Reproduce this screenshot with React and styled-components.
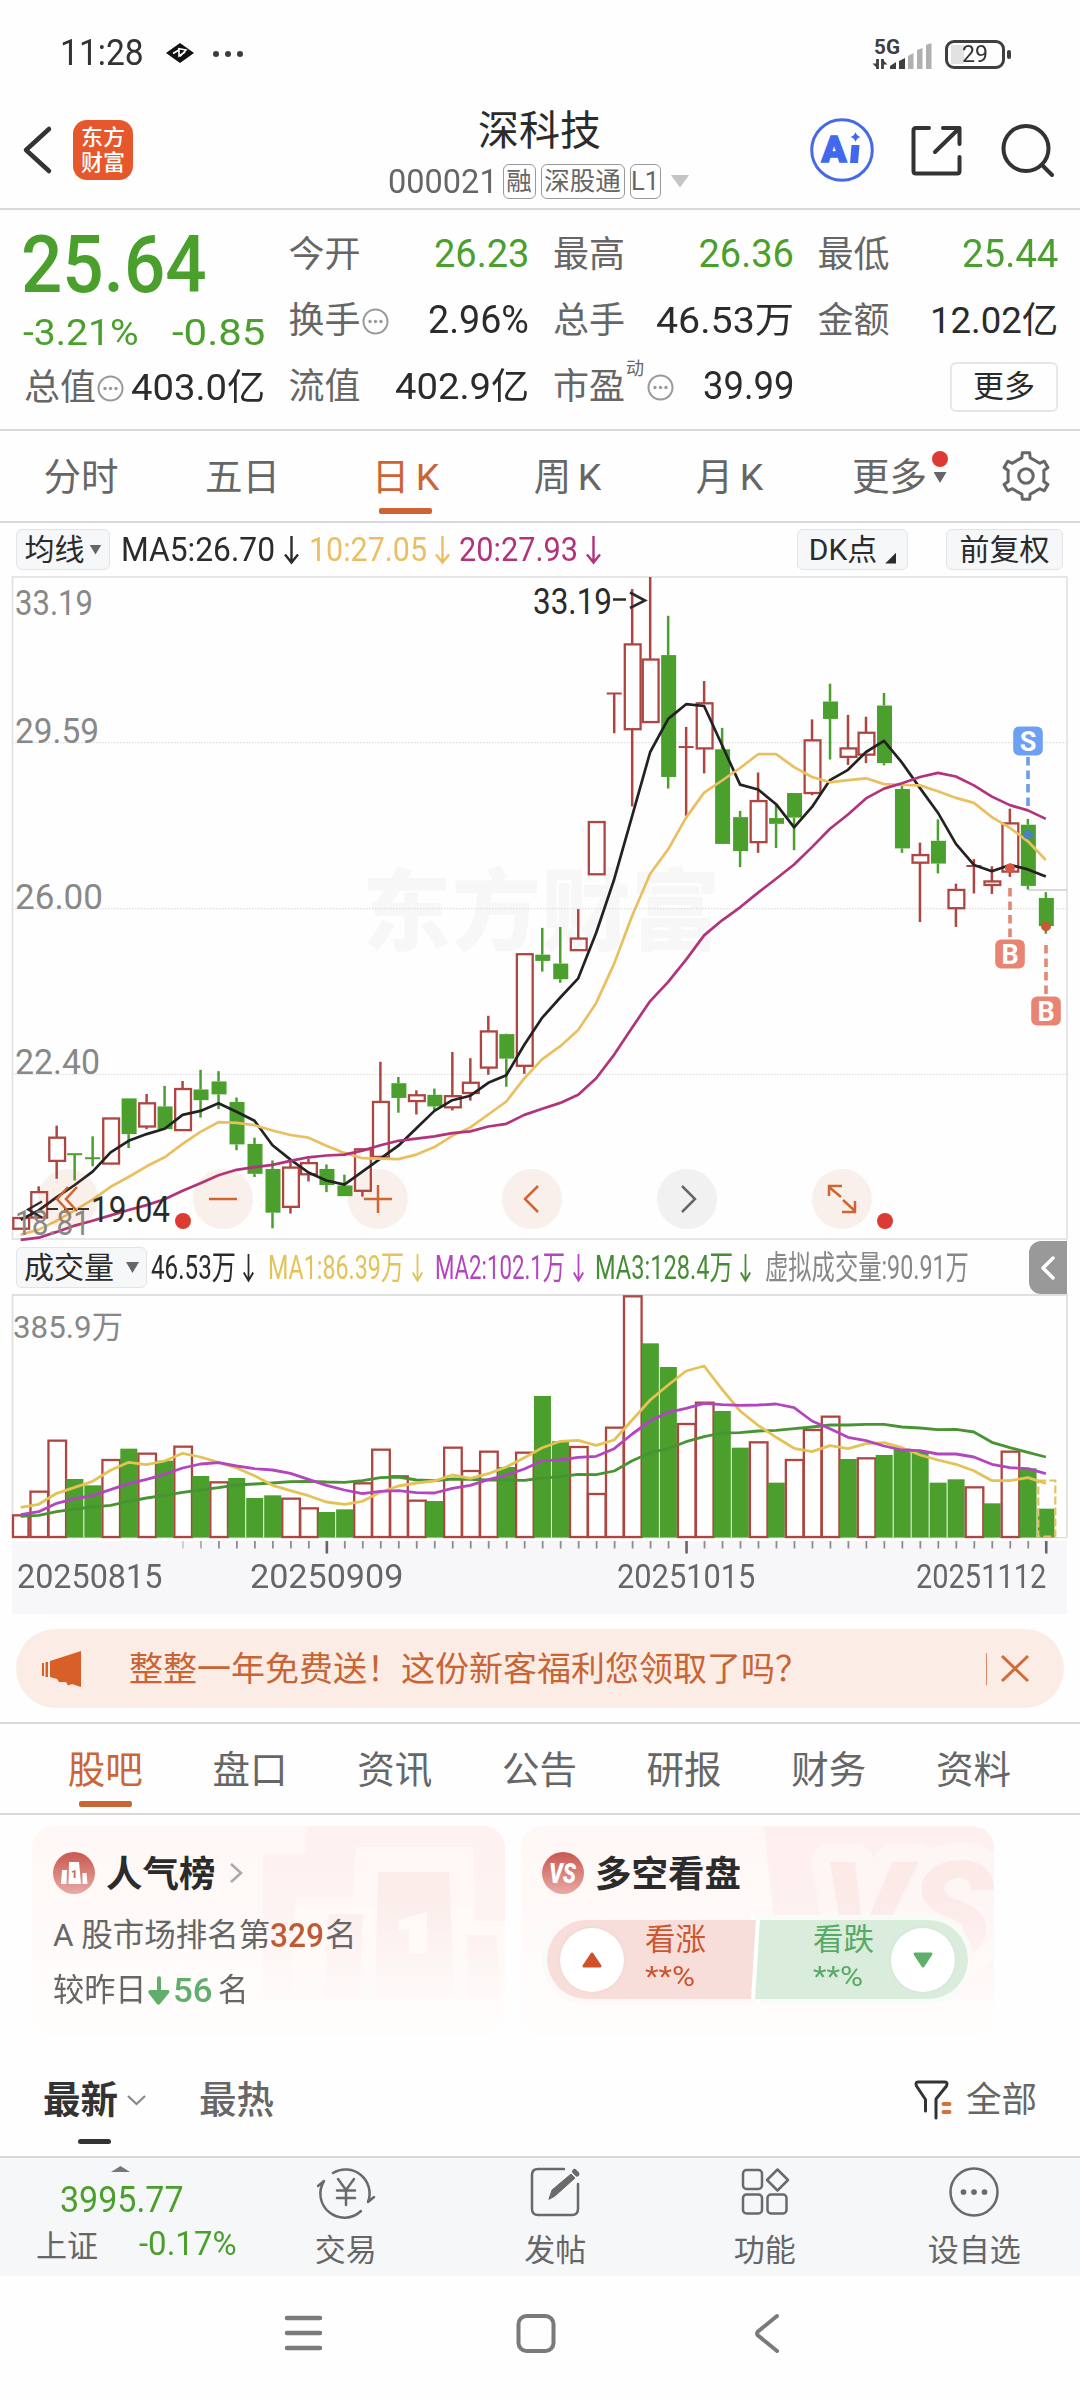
import React, { useLayoutEffect, useRef, useState } from "react";
import styled, { createGlobalStyle } from "styled-components";

const C = {
  green: "#4a9f2d",
  red: "#ad4640",
  orange: "#cb6536",
  text: "#2b2b2b",
  sub: "#666",
  faint: "#888",
  line: "#d8d8d8",
  panel: "#f6f7f9",
  gold: "#e9bf62",
  plum: "#b2337c",
};

const FONT = `Roboto, "Noto Sans CJK SC", sans-serif`;

const GlobalStyle = createGlobalStyle`
  body { margin: 0; background: #fefefe; }
  * { box-sizing: border-box; }
`;

const Page = styled.div`
  width: 1080px;
  height: 2400px;
  overflow: hidden;
  background: #fefefe;
  color: ${C.text};
  font-family: ${FONT};
  display: flex;
  flex-direction: column;
`;

/* ---------- text squeezed to a fixed measure ---------- */

const FitBox = styled.span`
  display: inline-block;
  flex: none;
  width: ${(p) => p.$w}px;
  height: ${(p) => p.$size * 1.2}px;
  line-height: ${(p) => p.$size * 1.2}px;
  font-size: ${(p) => p.$size}px;
  font-weight: ${(p) => p.$weight || 400};
  color: ${(p) => p.$color || "inherit"};
  margin-left: ${(p) => p.$ml || 0}px;
  white-space: nowrap;
`;
const FitInner = styled.span`
  display: inline-block;
  transform-origin: 0 50%;
`;

function Fit({ w, size, weight, color, ml, children }) {
  const ref = useRef(null);
  const [k, setK] = useState(1);
  useLayoutEffect(() => {
    setK(w / ref.current.offsetWidth);
  }, [w, children]);
  return (
    <FitBox $w={w} $size={size} $weight={weight} $color={color} $ml={ml}>
      <FitInner ref={ref} style={{ transform: `scaleX(${k})` }}>{children}</FitInner>
    </FitBox>
  );
}

/* ---------- status bar ---------- */

const StatusBar = styled.div`
  height: 92px;
  flex: none;
  padding: 16px 69px 0 60px;
  display: flex;
  align-items: center;
  justify-content: space-between;
  color: #333;
`;
const StatusGroup = styled.div`
  display: flex;
  align-items: center;
`;
const Icon = styled.svg`
  display: block;
  flex: none;
  overflow: visible;
  margin-left: ${(p) => p.$ml || 0}px;
  margin-top: ${(p) => p.$mt || 0}px;
`;
const Battery = styled.div`
  width: 60px;
  height: 29px;
  margin-left: 12px;
  border: 3px solid #3f3f3f;
  border-radius: 9px;
  padding: 2px;
  display: flex;
  align-items: center;
  justify-content: center;
  background: linear-gradient(90deg, #e2e2e2 0 13px, transparent 13px) 3px 2px / 40px 19px no-repeat;
`;
const BatteryTip = styled.div`
  width: 4px;
  height: 9px;
  margin-left: 2px;
  border-radius: 2px;
  background: #3f3f3f;
`;

/* ---------- title bar ---------- */

const TitleBar = styled.header`
  height: 118px;
  flex: none;
  border-bottom: 2px solid ${C.line};
  padding: 0 26px 0 22px;
  display: grid;
  grid-template-columns: 1fr auto 1fr;
  align-items: center;
`;
const Side = styled.div`
  display: flex;
  align-items: center;
  justify-content: ${(p) => (p.$end ? "flex-end" : "flex-start")};
`;
const Logo = styled.div`
  width: 60px;
  height: 60px;
  margin-left: 21px;
  border-radius: 14px;
  background: #e7572c;
  color: #fff;
  font-size: 22px;
  font-weight: 500;
  line-height: 25px;
  display: flex;
  flex-direction: column;
  align-items: center;
  justify-content: center;
`;
const TitleBlock = styled.div`
  padding: 12px 0 0 1px;
  display: flex;
  flex-direction: column;
  align-items: center;
`;
const StockName = styled.h1`
  margin: 0 0 0 2px;
  font-size: 41px;
  font-weight: 400;
  line-height: 50px;
`;
const CodeRow = styled.div`
  height: 50px;
  display: flex;
  align-items: center;
  color: ${C.sub};
`;
const Tag = styled.span`
  width: ${(p) => p.$w}px;
  height: 35px;
  margin-left: 5px;
  border: 1.5px solid #999;
  border-radius: 6px;
  font-size: 25.5px;
  line-height: 33px;
  display: flex;
  justify-content: center;
  white-space: nowrap;
`;
const Triangle = styled.span`
  flex: none;
  width: ${(p) => p.$w}px;
  height: ${(p) => p.$h}px;
  margin-left: ${(p) => p.$ml || 0}px;
  background: ${(p) => p.$color};
  clip-path: ${(p) => (p.$up ? "polygon(50% 0, 100% 100%, 0 100%)" : "polygon(0 0, 100% 0, 50% 100%)")};
`;

/* ---------- quote ---------- */

const Quote = styled.section`
  height: 221px;
  flex: none;
  padding: 12px 22px 7px 24px;
  border-bottom: 2px solid ${C.line};
  display: grid;
  grid-template-columns: repeat(4, 1fr);
  column-gap: 24px;
`;
const QuoteCol = styled.div`
  display: flex;
  flex-direction: column;
`;
const Cell = styled.div`
  height: ${(p) => p.$h || 66}px;
  display: flex;
  align-items: center;
  justify-content: space-between;
  color: ${(p) => p.$color || C.text};
`;
const Label = styled.span`
  display: flex;
  align-items: center;
  font-size: 36px;
  line-height: 44px;
  color: ${C.sub};
  white-space: nowrap;
`;
const Sup = styled.span`
  align-self: flex-start;
  font-size: 18px;
  line-height: 20px;
  margin: -6px 3px 0 1px;
`;
const MoreButton = styled.button`
  width: 108px;
  height: 50px;
  margin: -1px 0 0 auto;
  padding: 0;
  border: 2px solid #e6e6e6;
  border-radius: 6px;
  background: transparent;
  color: ${C.text};
  font: 400 31px/46px ${FONT};
`;

/* ---------- tabs ---------- */

const Tabs = styled.nav`
  height: ${(p) => p.$h}px;
  flex: none;
  border-top: ${(p) => (p.$top ? `2px solid ${C.line}` : "none")};
  border-bottom: 2px solid ${C.line};
  padding: 20px 0 0 ${(p) => p.$pl}px;
  display: flex;
`;
const TabItem = styled.div`
  width: ${(p) => p.$w}px;
  flex: none;
  display: flex;
  flex-direction: column;
  align-items: center;
  color: ${(p) => (p.$active ? C.orange : C.sub)};
  &::after {
    content: "";
    width: 53px;
    height: 6px;
    margin-top: 6px;
    border-radius: 2px;
    background: ${(p) => (p.$active ? C.orange : "transparent")};
  }
`;
const TabLabel = styled.span`
  padding-top: 1px;
  font-size: 37.5px;
  line-height: 50px;
  word-spacing: -3px;
  white-space: nowrap;
`;
const MoreMark = styled.span`
  padding-left: 5px;
  display: flex;
  flex-direction: column;
  align-items: center;
  gap: 5px;
`;
const Dot = styled.span`
  width: 16px;
  height: 16px;
  border-radius: 50%;
  background: #dc3b33;
`;
const TabsMore = styled.div`
  display: flex;
  height: 50px;
  color: ${C.sub};
  margin-left: 40px;
`;

/* ---------- indicator rows ---------- */

const IndicatorRow = styled.div`
  height: 53px;
  flex: none;
  padding: 0 ${(p) => p.$pr}px 0 16px;
  display: flex;
  align-items: center;
`;
const Chip = styled.button`
  width: ${(p) => p.$w}px;
  height: 41px;
  flex: none;
  margin: 0 0 0 ${(p) => p.$ml || 0}px;
  padding: 0;
  border: 1.5px solid #e2e4e8;
  border-radius: 6px;
  background: ${C.panel};
  color: ${C.text};
  font: 400 ${(p) => p.$size || 30}px/39px ${FONT};
  display: flex;
  align-items: center;
  justify-content: center;
  white-space: nowrap;
`;
const Corner = styled.span`
  width: 11px;
  height: 11px;
  margin: 17px 0 0 8px;
  background: ${C.text};
  clip-path: polygon(100% 0, 100% 100%, 0 100%);
`;
const Drawer = styled.div`
  width: 38px;
  height: 53px;
  margin-left: auto;
  border-radius: 12px 0 0 12px;
  background: #999;
  display: flex;
  align-items: center;
  justify-content: center;
`;

/* ---------- charts ---------- */

const ChartArea = styled.div`
  position: relative;
  height: 665px;
  flex: none;
`;
const Plot = styled.svg`
  display: block;
  flex: none;
  font-family: ${FONT};
`;
const Controls = styled.div`
  position: absolute;
  left: 38px;
  bottom: 12px;
  display: flex;
  gap: 94.8px;
`;
const RoundButton = styled.button`
  width: 60px;
  height: 60px;
  padding: 0;
  border: 0;
  border-radius: 50%;
  background: ${(p) => (p.$muted ? "rgba(0,0,0,.05)" : "rgba(205,105,45,.09)")};
  display: flex;
  align-items: center;
  justify-content: center;
`;
const Axis = styled.div`
  height: 73px;
  flex: none;
  margin: 0 13px 0 12px;
  background: #f7f7fa;
  color: ${C.sub};
`;
const AxisLabels = styled.div`
  display: flex;
  padding: 1px 0 0 5px;
`;

/* ---------- banner ---------- */

const Banner = styled.div`
  height: 79px;
  flex: none;
  margin: 15px 16px 14px;
  padding: 0 35px 0 26px;
  border-radius: 40px;
  background: #fbede5;
  display: flex;
  align-items: center;
  color: #c96434;
`;
const BannerText = styled.span`
  margin-left: 47px;
  font-size: 34px;
  line-height: 44px;
  white-space: nowrap;
`;
const BannerRule = styled.span`
  width: 1.5px;
  height: 32px;
  margin: 0 14px 0 auto;
  background: #d58a64;
`;

/* ---------- cards ---------- */

const Cards = styled.section`
  flex: none;
  padding: 11px 0 0 32px;
  display: flex;
  gap: 16px;
`;
const Card = styled.article`
  position: relative;
  width: 473px;
  height: 210px;
  padding: 20px 20px 0 21px;
  border-radius: 22px;
  overflow: hidden;
  background: linear-gradient(180deg, #fef7f5, #fffdfc 90%);
`;
const CardArt = styled.svg`
  position: absolute;
  inset: 0;
  mask-image: linear-gradient(180deg, #000 35%, rgba(0,0,0,.15) 83%, transparent 85%);
`;
const CardBody = styled.div`
  position: relative;
`;
const CardHead = styled.div`
  height: 54px;
  display: flex;
  align-items: center;
`;
const CardTitle = styled.span`
  margin: 3px 0 0 11px;
  font-size: 36.5px;
  line-height: 46px;
  font-weight: 700;
`;
const CardLine = styled.div`
  height: 55px;
  margin-top: ${(p) => p.$mt || 0}px;
  display: flex;
  align-items: center;
  font-size: 31.8px;
  color: ${C.sub};
  white-space: nowrap;
`;
const Vote = styled.div`
  position: relative;
  width: 431px;
  height: 89px;
  margin: 15px 0 0 0;
  border: 5px solid rgba(255,255,255,.8);
  border-radius: 45px;
  background: linear-gradient(93.5deg, #f8deda 0 208px, #fff 209px 212px, #daeddc 213px);
  padding: 0 12px 0 13px;
  display: flex;
  align-items: center;
`;
const VoteKnob = styled.span`
  width: 64px;
  height: 64px;
  border-radius: 50%;
  background: #fff;
  box-shadow: 0 0 4px rgba(0,0,0,.05);
  display: flex;
  align-items: center;
  justify-content: center;
`;
const VoteText = styled.div`
  margin: -5px ${(p) => p.$mr || 0}px 0 ${(p) => p.$ml}px;
  color: ${(p) => p.$color};
  font-size: 30.5px;
  line-height: 38px;
  display: flex;
  flex-direction: column;
  gap: 2px;
`;

/* ---------- filter row ---------- */

const FilterRow = styled.div`
  height: 122px;
  flex: none;
  border-bottom: 2px solid #d6d9dc;
  padding: 39px 43px 0 43px;
  display: flex;
`;
const FilterTab = styled.div`
  display: flex;
  flex-direction: column;
  font-size: 37.5px;
  line-height: 50px;
  font-weight: ${(p) => p.$weight};
  color: ${(p) => p.$color};
  margin-left: ${(p) => p.$ml || 0}px;
`;
const FilterTop = styled.div`
  display: flex;
  align-items: center;
`;
const FilterBar = styled.span`
  width: 33px;
  height: 5px;
  margin: 14px 0 0 35px;
  border-radius: 3px;
  background: #333;
`;
const FilterAll = styled.div`
  margin-left: auto;
  height: 50px;
  display: flex;
  align-items: center;
  font-size: 35.5px;
  line-height: 50px;
  color: ${C.sub};
`;

/* ---------- bottom bars ---------- */

const BottomBar = styled.footer`
  height: 118px;
  flex: none;
  background: ${C.panel};
  display: flex;
`;
const IndexBox = styled.div`
  width: 241px;
  padding-top: 8px;
  display: flex;
  flex-direction: column;
  align-items: center;
`;
const IndexRow = styled.div`
  align-self: stretch;
  height: ${(p) => p.$h}px;
  margin-top: ${(p) => p.$mt || 0}px;
  padding-left: ${(p) => p.$pl}px;
  display: flex;
  align-items: center;
  font-size: 31px;
  color: ${C.sub};
`;
const Action = styled.div`
  width: 209.5px;
  padding-top: 8px;
  display: flex;
  flex-direction: column;
  align-items: center;
  font-size: 31px;
  line-height: 40px;
  color: ${C.sub};
  gap: 13px;
`;
const SystemNav = styled.div`
  height: 124px;
  flex: none;
  padding: 38px 0 0 285px;
  display: flex;
`;

/* ---------- chart data ---------- */

// high, body top, body bottom, low; u = up (hollow), d = down (solid)
const CANDLES = [
  "u 1474 1474 1498 1498", "u 1403 1416 1473 1473", "u 1267 1294 1346 1386", "d 1331 1330 1332 1390",
  "d 1291 1339 1341 1358", "u 1251 1251 1352 1352", "d 1206 1206 1286 1317", "u 1196 1217 1269 1275",
  "d 1178 1224 1275 1275", "u 1167 1185 1277 1277", "d 1142 1186 1210 1249", "d 1145 1168 1197 1230",
  "d 1204 1214 1309 1322", "d 1294 1308 1375 1382", "d 1345 1364 1462 1497", "u 1346 1361 1449 1464",
  "u 1341 1351 1376 1392", "d 1354 1364 1400 1416", "d 1377 1401 1425 1425", "u 1320 1320 1413 1426",
  "u 1124 1214 1337 1337", "d 1158 1172 1205 1238", "u 1188 1199 1212 1242", "d 1184 1198 1224 1232",
  "u 1102 1201 1226 1233", "u 1116 1171 1194 1211", "u 1021 1056 1137 1153", "d 1061 1062 1117 1180",
  "u 883 883 1133 1151", "d 824 884 898 922", "d 822 904 939 947", "u 782 848 874 874",
  "u 587 587 704 704", "u 299 298 300 388", "u 65 189 379 552", "u 38 223 363 363",
  "d 125 213 486 512", "u 374 418 420 573", "u 271 321 422 478", "d 376 424 636 636",
  "d 562 576 652 688", "u 476 540 632 656", "d 549 578 591 645", "d 522 522 577 650",
  "u 357 404 522 527", "d 277 317 356 447", "u 347 422 441 459", "u 351 387 436 455",
  "d 298 326 455 460", "d 506 513 646 656", "u 633 661 678 811", "d 581 629 680 702",
  "u 725 739 780 822", "u 670 684 687 747", "u 686 720 728 748", "u 557 590 698 710",
  "d 580 593 730 738", "d 744 757 820 837",
].map((s) => {
  const [kind, ...v] = s.split(" ");
  return { up: kind === "u", v: v.map(Number) };
});

const MA5 = [1478,1457,1427,1400,1370,1327,1301,1286,1274,1243,1234,1217,1236,1256,1311,1343,1372,1390,1399,1370,1341,1312,1273,1234,1210,1200,1171,1154,1086,1025,980,937,835,715,573,430,356,323,327,415,503,514,547,599,553,493,470,430,405,454,511,566,636,683,697,683,693,709];
const MA10 = [1511,1500,1480,1457,1433,1404,1382,1358,1338,1308,1281,1259,1261,1266,1278,1288,1294,1312,1328,1340,1341,1342,1332,1315,1290,1271,1242,1213,1161,1118,1089,1053,992,904,797,703,648,577,521,494,466,435,435,464,486,498,493,489,502,504,505,518,533,544,576,600,630,672];
const MA20 = [1523,1518,1505,1491,1480,1468,1456,1445,1432,1413,1396,1378,1366,1360,1355,1346,1338,1334,1332,1323,1311,1301,1296,1291,1284,1280,1269,1263,1243,1229,1216,1198,1161,1108,1047,988,945,895,841,807,778,745,714,682,643,602,570,534,512,500,486,477,485,505,530,549,561,580];

const VOLUMES = [853,782,629,747,766,687,656,668,692,647,738,754,744,804,796,803,832,846,838,757,656,736,809,813,650,720,662,711,665,498,634,648,789,590,196,340,411,579,515,543,653,634,758,687,597,557,687,682,675,656,666,758,748,769,820,662,715,836];
const HOLLOW_BARS = new Set([0,1,2,5,7,9,11,15,16,19,20,21,22,24,25,26,28,31,32,33,34,37,38,41,43,44,45,47,53,55]);
const VMA1 = [832,823,790,772,754,721,697,704,693,670,681,697,714,737,766,782,797,816,823,814,787,768,759,753,735,745,731,711,683,653,634,631,646,630,570,510,465,423,408,478,543,586,622,655,665,647,656,641,638,653,675,690,703,722,752,752,743,760];
const VMA2 = [854,845,820,806,797,779,761,748,733,714,702,698,708,716,720,730,748,766,780,791,784,782,788,789,775,766,749,735,717,692,690,682,679,656,612,573,547,535,520,524,526,525,522,533,573,596,622,632,648,660,662,672,672,681,703,713,716,731];
const VMA3 = [859,856,845,837,831,826,814,804,796,787,780,773,765,762,759,755,754,756,757,752,743,741,750,752,747,748,750,750,751,744,740,733,734,723,692,668,656,635,620,609,608,603,601,596,591,585,585,583,583,591,594,599,598,606,637,653,667,681];

const cx = (i) => 20.7 + 17.985 * i;
const priceY = (v) => 560 + v / 2.24;
const volY = (v) => 1230 + v / 3;
const line = (vals, fy) => vals.map((v, i) => `${cx(i).toFixed(1)},${fy(v).toFixed(1)}`).join(" ");

function Candle({ i, up, v }) {
  const [h, t, b, l] = v.map(priceY);
  const x = cx(i);
  const color = up ? C.red : C.green;
  const flat = b - t < 1.6;
  return (
    <g stroke={color} strokeWidth="2.5" fill="none">
      {h < t && <line x1={x} x2={x} y1={h} y2={t} />}
      {l > b && <line x1={x} x2={x} y1={b} y2={l} />}
      {flat ? (
        <line x1={x - 7.5} x2={x + 7.5} y1={(t + b) / 2} y2={(t + b) / 2} strokeWidth="2" />
      ) : up ? (
        <rect x={x - 7.4} y={t} width="15.8" height={b - t} strokeWidth="2.3" />
      ) : (
        <rect x={x - 7} y={t} width="15" height={b - t} fill={color} stroke="none" />
      )}
    </g>
  );
}

function Marker({ x, y, letter, color }) {
  return (
    <g>
      <rect x={x - 14.8} y={y - 14.5} width="29.6" height="29" rx="6" fill={color} />
      <text x={x} y={y + 9.8} textAnchor="middle" fontSize="27" fontWeight="700" fill="#fff">{letter}</text>
    </g>
  );
}

const PRICE_LABELS = [
  ["33.19", 614.5, 78], ["29.59", 742.6, 84], ["26.00", 908.6, 88], ["22.40", 1074, 85], ["18.81", 1235, 75],
];

function PriceChart() {
  return (
    <Plot width="1080" height="665" viewBox="0 576 1080 665">
      <text x="362" y="943" fontSize="89" fontWeight="900" fill="#f7f7f7" textLength="358">东方财富</text>
      {[742.6, 908.7, 1074.3].map((y) => (
        <line key={y} x1="12" x2="1067" y1={y} y2={y} stroke="#dedede" strokeWidth="1.2" strokeDasharray="1.5 1.5" />
      ))}
      <rect x="12.5" y="577" width="1054.5" height="662" fill="none" stroke="#e0e0e0" strokeWidth="1.6" />
      <line x1="1028" x2="1067" y1="890" y2="890" stroke="#ccc" strokeWidth="1.6" />
      {CANDLES.map((c, i) => <Candle key={i} i={i} {...c} />)}
      <g fill="none" strokeWidth="2.7" strokeLinejoin="round">
        <polyline points={line(MA5, priceY)} stroke="#222" />
        <polyline points={line(MA10, priceY)} stroke={C.gold} />
        <polyline points={line(MA20, priceY)} stroke={C.plum} />
      </g>
      {PRICE_LABELS.map(([t, y, w]) => (
        <text key={t} x="15" y={y} fontSize="35" fill={C.faint} textLength={w} lengthAdjust="spacingAndGlyphs">{t}</text>
      ))}
      <g fill={C.text} fontSize="36">
        <text x="533" y="613.5" textLength="79" lengthAdjust="spacingAndGlyphs">33.19</text>
        <text x="91" y="1222" textLength="79" lengthAdjust="spacingAndGlyphs">19.04</text>
      </g>
      <g stroke={C.text} strokeWidth="2.6" fill="none">
        <path d="M613 599.5h13M630 592.5l15 8-15 7.5" />
        <path d="M42 1201.5l-14 8 14 8M47 1209h11M64 1209h9M78 1209h11" strokeWidth="2.2" />
      </g>
      <circle cx="183" cy="1221" r="8" fill="#dc3b33" />
      <circle cx="885" cy="1221" r="8" fill="#dc3b33" />
      <g strokeWidth="3.6" strokeDasharray="8.5 5">
        <line x1="1028" x2="1028" y1="757" y2="807" stroke="#6a9eea" />
        <line x1="1010" x2="1010" y1="888" y2="938" stroke="#e58671" />
        <line x1="1046" x2="1046" y1="945" y2="995" stroke="#e58671" />
      </g>
      <ellipse cx="1028" cy="834.5" rx="5" ry="4.6" fill="#4b83bd" />
      <ellipse cx="1010" cy="868" rx="5" ry="4.6" fill="#de5443" />
      <ellipse cx="1046" cy="926.5" rx="5" ry="4.6" fill="#c75a35" />
      <Marker x={1028} y={741} letter="S" color="#6d9ff2" />
      <Marker x={1010} y={954} letter="B" color="#e98472" />
      <Marker x={1046} y={1011} letter="B" color="#e98472" />
    </Plot>
  );
}

function VolumeChart() {
  return (
    <Plot width="1080" height="247" viewBox="0 1294 1080 247">
      <path d="M12.5 1537V1295H1067V1537" fill="none" stroke="#e0e0e0" strokeWidth="1.8" />
      <line x1="12" x2="1067" y1="1537.6" y2="1537.6" stroke="#dcdcdc" strokeWidth="1.4" />
      <text x="13" y="1337.5" fontSize="32" fill={C.faint} textLength="110" lengthAdjust="spacingAndGlyphs">385.9万</text>
      {VOLUMES.map((v, i) =>
        HOLLOW_BARS.has(i) ? (
          <rect key={i} x={i ? cx(i) - 8.2 : 13} y={volY(v) + 1} width={i ? 17.6 : 15.5} height={1536 - volY(v)} fill="none" stroke={C.red} strokeWidth="2.3" />
        ) : (
          <rect key={i} x={cx(i) - 8.3} y={volY(v)} width="17" height={1537.5 - volY(v)} fill={C.green} />
        )
      )}
      <rect x="1038.3" y="1480.5" width="17" height="56" fill="none" stroke={C.gold} strokeWidth="2.2" strokeDasharray="8 3" />
      <g fill="none" strokeWidth="2.8" strokeLinejoin="round">
        <polyline points={line(VMA3, volY)} stroke="#489433" />
        <polyline points={line(VMA1, volY)} stroke="#e4c356" />
        <polyline points={line(VMA2, volY)} stroke="#b345be" />
      </g>
    </Plot>
  );
}

function AxisTicks() {
  return (
    <Plot width="1055" height="15" viewBox="12 1541 1055 15">
      {Array.from({ length: 49 }, (_, k) => k + 9).map((i) => {
        const major = i === 17 || i === 37 || i === 57;
        return (
          <line key={i} x1={cx(i) + 0.4} x2={cx(i) + 0.4} y1="1541" y2={major ? 1553.5 : 1548.5}
            stroke={major ? "#666" : "#8c8c8c"} strokeWidth={major ? 2.6 : 1.8} opacity={i === 9 ? 0.4 : i === 10 ? 0.7 : 1} />
        );
      })}
    </Plot>
  );
}

/* ---------- icons ---------- */

const DownArrow = ({ color, ml, w = 15 }) => (
  <Icon $ml={ml} $mt={1} width={w} height="28" viewBox="0 0 15 28" preserveAspectRatio="none" fill="none" stroke={color} strokeWidth="2.4">
    <path d="M7.5 0v26M1 18.5l6.5 8 6.5-8" />
  </Icon>
);

const InfoDots = ({ ml = 1 }) => (
  <Icon $ml={ml} width="27" height="27" viewBox="0 0 27 27">
    <circle cx="13.5" cy="13.5" r="12" fill="none" stroke="#999" strokeWidth="2" />
    {[8, 13.5, 19].map((x) => <circle key={x} cx={x} cy="13.5" r="1.7" fill="#999" />)}
  </Icon>
);

function Gear({ ml }) {
  const pts = [];
  for (let k = 0; k < 6; k++) {
    [[-30, 18], [-13, 18.6], [-9, 23.5], [9, 23.5], [13, 18.6]].forEach(([d, r]) => {
      const a = ((k * 60 - 90 + d) * Math.PI) / 180;
      pts.push(`${(25 + r * Math.cos(a)).toFixed(2)},${(25 + r * Math.sin(a)).toFixed(2)}`);
    });
  }
  return (
    <Icon $ml={ml} width="50" height="50" viewBox="0 0 50 50" fill="none" stroke="#666" strokeWidth="3" strokeLinejoin="round">
      <polygon points={pts.join(" ")} />
      <circle cx="25" cy="25" r="7.2" />
    </Icon>
  );
}

/* ---------- sections ---------- */

function Status() {
  return (
    <StatusBar>
      <StatusGroup>
        <Fit w={84} size={36}>11:28</Fit>
        <Icon $ml={22} $mt={-3} width="28" height="20" viewBox="0 0 28 20">
          <path d="M14 0L28 10 14 20 0 10z" fill="#111" />
          <path d="M7 10.5l6-3.5v6l6-4M12 5.5l8 1.5-6 6.5" fill="none" stroke="#fff" strokeWidth="1.6" />
        </Icon>
        <Icon $ml={18} width="32" height="8" viewBox="0 0 32 8" fill="#3c3c3c">
          <circle cx="4" cy="4" r="3" /><circle cx="16" cy="4" r="3" /><circle cx="28" cy="4" r="3" />
        </Icon>
      </StatusGroup>
      <StatusGroup>
        <Icon width="60" height="30" viewBox="874 37 60 30">
          <text x="875" y="52" fontSize="20" fontWeight="700" fill="#3f3f3f" textLength="26" lengthAdjust="spacingAndGlyphs">5G</text>
          <path d="M878.5 57v10M883.5 57v10" stroke="#3f3f3f" strokeWidth="2.8" />
          <path d="M873.5 61.5h5v5zM888.5 62.5h-5v-5z" fill="#3f3f3f" />
          <path d="M891 67v-3l6-4v7zM900 67v-8l6-3v11z" fill="#3f3f3f" />
          <path d="M909 67V54l5.5-3v16zM918 67V48l5.500-2v21zM927 67V43l5.5-2v26z" fill="#b0b0b0" />
        </Icon>
        <Battery><Fit w={26} size={24}>29</Fit></Battery>
        <BatteryTip />
      </StatusGroup>
    </StatusBar>
  );
}

function Header() {
  return (
    <TitleBar>
      <Side>
        <Icon width="30" height="48" viewBox="0 0 30 48" fill="none" stroke="#333" strokeWidth="4.5" strokeLinecap="round" strokeLinejoin="round">
          <path d="M27 3L4 24l23 21" />
        </Icon>
        <Logo><span>东方</span><span>财富</span></Logo>
      </Side>
      <TitleBlock>
        <StockName>深科技</StockName>
        <CodeRow>
          <Fit w={110} size={34}>000021</Fit>
          <Tag $w={33}>融</Tag>
          <Tag $w={84}>深股通</Tag>
          <Tag $w={31}>L1</Tag>
          <Triangle $w={19} $h={13} $ml={10} $color="#c4c4c4" />
        </CodeRow>
      </TitleBlock>
      <Side $end>
        <Icon width="64" height="64" viewBox="0 0 64 64">
          <circle cx="32" cy="32" r="30.3" fill="none" stroke="#466ae6" strokeWidth="3" />
          <text x="11.5" y="43.5" fontSize="36" fontWeight="900" fill="#4169ee" stroke="#4169ee" strokeWidth="1.5" textLength="25" lengthAdjust="spacingAndGlyphs">A</text>
          <path d="M41.5 27h8l-1.500 18h-8z" fill="#4169ee" />
          <path d="M45.5 14q1.2 4 5 5-3.8 1-5 5-1.2-4-5-5 3.8-1 5-5z" fill="#4169ee" />
        </Icon>
        <Icon $ml={37} width="51" height="51" viewBox="0 0 51 51" fill="none" stroke="#333" strokeWidth="4" strokeLinecap="round" strokeLinejoin="round">
          <path d="M18 3H5Q2.500 3 2.500 5.500V46Q2.500 48.500 5 48.500H46Q48.500 48.500 48.500 46V32" />
          <path d="M32 3h16.500V19M48 3.500L24 27" />
        </Icon>
        <Icon $ml={40} width="52" height="52" viewBox="0 0 52 52" fill="none" stroke="#333" strokeWidth="4" strokeLinecap="round">
          <circle cx="24" cy="24.5" r="22.5" />
          <path d="M40 41l10 10" />
        </Icon>
      </Side>
    </TitleBar>
  );
}

function QuotePanel() {
  return (
    <Quote>
      <QuoteCol>
        <Cell $h={87} $color={C.green}><Fit w={186} size={79} weight={500} ml={-3}>25.64</Fit></Cell>
        <Cell $h={48} $color={C.green}>
          <Fit w={115} size={37} ml={-1}>-3.21%</Fit>
          <Fit w={93} size={37}>-0.85</Fit>
        </Cell>
        <Cell $h={62}><Label>总值<InfoDots /></Label><Fit w={134} size={36.5}>403.0亿</Fit></Cell>
      </QuoteCol>
      <QuoteCol>
        <Cell $color={C.green}><Label>今开</Label><Fit w={95} size={38}>26.23</Fit></Cell>
        <Cell><Label>换手<InfoDots /></Label><Fit w={101} size={38}>2.96%</Fit></Cell>
        <Cell><Label>流值</Label><Fit w={134} size={36.5}>402.9亿</Fit></Cell>
      </QuoteCol>
      <QuoteCol>
        <Cell $color={C.green}><Label>最高</Label><Fit w={95} size={38}>26.36</Fit></Cell>
        <Cell><Label>总手</Label><Fit w={138} size={36.5}>46.53万</Fit></Cell>
        <Cell><Label>市盈<Sup>动</Sup><InfoDots ml={0} /></Label><Fit w={91} size={38}>39.99</Fit></Cell>
      </QuoteCol>
      <QuoteCol>
        <Cell $color={C.green}><Label>最低</Label><Fit w={96} size={38}>25.44</Fit></Cell>
        <Cell><Label>金额</Label><Fit w={128} size={36.5}>12.02亿</Fit></Cell>
        <Cell><MoreButton>更多</MoreButton></Cell>
      </QuoteCol>
    </Quote>
  );
}

function PeriodTabs() {
  return (
    <Tabs $h={92} $pl={0}>
      {[["分时", 162], ["五日", 161], ["日 K", 165], ["周 K", 159], ["月 K", 165]].map(([t, w]) => (
        <TabItem key={t} $w={w} $active={t === "日 K"}>
          <TabLabel>{t}</TabLabel>
        </TabItem>
      ))}
      <TabsMore>
        <TabLabel>更多</TabLabel>
        <MoreMark>
          <Dot />
          <Triangle $w={13} $h={11} $color="#666" />
        </MoreMark>
      </TabsMore>
      <Gear ml={53} />
    </Tabs>
  );
}

function MaRow() {
  return (
    <IndicatorRow $pr={16}>
      <Chip $w={94}>均线<Triangle $w={12} $h={10} $ml={5} $color="#666" /></Chip>
      <Fit ml={11} w={154} size={33}>MA5:26.70</Fit>
      <DownArrow ml={9} color={C.text} />
      <Fit ml={10} w={118} size={33} color={C.gold}>10:27.05</Fit>
      <DownArrow ml={8} color={C.gold} />
      <Fit ml={9} w={119} size={33} color={C.plum}>20:27.93</Fit>
      <DownArrow ml={8} color={C.plum} />
      <Chip $w={111} $ml={196}>DK点<Corner /></Chip>
      <Chip $w={117} $ml={38}>前复权</Chip>
    </IndicatorRow>
  );
}

function VolumeRow() {
  return (
    <IndicatorRow $pr={13}>
      <Chip $w={131}>成交量<Triangle $w={13} $h={11} $ml={12} $color="#666" /></Chip>
      <Fit ml={4} w={85} size={33}>46.53万</Fit>
      <DownArrow ml={7} w={11} color={C.text} />
      <Fit ml={14} w={136} size={33} color="#e4c356">MA1:86.39万</Fit>
      <DownArrow ml={8} w={11} color="#e4c356" />
      <Fit ml={12} w={130} size={33} color="#b345be">MA2:102.1万</Fit>
      <DownArrow ml={8} w={11} color="#b345be" />
      <Fit ml={11} w={138} size={33} color="#468c35">MA3:128.4万</Fit>
      <DownArrow ml={7} w={11} color="#468c35" />
      <Fit ml={14} w={204} size={33} color={C.faint}>虚拟成交量:90.91万</Fit>
      <Drawer>
        <Icon width="14" height="24" viewBox="0 0 14 24" fill="none" stroke="#fff" strokeWidth="3.5" strokeLinecap="round" strokeLinejoin="round">
          <path d="M12 2L2 12l10 10" />
        </Icon>
      </Drawer>
    </IndicatorRow>
  );
}

const CONTROL_PATHS = [
  "M14 2L3 14l11 12M23 2L12 14l11 12",
  "M0 14h28",
  "M0 14h28M14 0v28",
  "M20 1L7 14l13 13",
  "M9 1l13 13L9 27",
  "M13 12L1 2M1 11V1h13M15 15l12 11M27 16v11H14",
];

function ChartControls() {
  return (
    <Controls>
      {CONTROL_PATHS.map((d, i) => (
        <RoundButton key={d} $muted={i === 4}>
          <Icon width="28" height="28" viewBox="0 0 28 28" fill="none" stroke={i === 4 ? "#666" : "#cf6531"} strokeWidth="2.5">
            <path d={d} />
          </Icon>
        </RoundButton>
      ))}
    </Controls>
  );
}

function PopularityCard() {
  return (
    <Card>
      <CardArt width="473" height="210" viewBox="0 0 473 210">
        <defs>
          <linearGradient id="fade" x1="0" y1="0" x2="0" y2="1">
            <stop offset="0" stopColor="#fbecea" /><stop offset="1" stopColor="#fcf0ee" />
          </linearGradient>
        </defs>
        <path d="M276 0H473V178H231V27H274z" fill="#fceeec" opacity=".6" />
        <path d="M324 21H441L443 95H473V178H258L264 72H321z" fill="#fff8f6" />
        <path d="M346 46h71l6 125h-80zM297 88h34l-3 83h-35zM435 109h29l6 62h-33z" fill="url(#fade)" />
        <path d="M366 94l29-8v41h-18V104h-11z" fill="#fff8f6" />
      </CardArt>
      <CardBody>
        <CardHead>
          <Icon width="42" height="42" viewBox="0 0 42 42">
            <defs>
              <linearGradient id="badge" x1="0" y1="0" x2="0" y2="1">
                <stop offset="0" stopColor="#c85850" /><stop offset="1" stopColor="#e9aaa4" />
              </linearGradient>
            </defs>
            <circle cx="21" cy="21" r="21" fill="url(#badge)" />
            <path d="M16 10h10l2 22H15.5zM9 18h5l-.5 14H8zM29.5 21h4l1 11h-5z" fill="#fff" />
            <text x="18" y="25.5" fontSize="11" fontWeight="900" fill="#cf6b64">1</text>
          </Icon>
          <CardTitle>人气榜</CardTitle>
          <Icon $ml={14} width="12" height="20" viewBox="0 0 12 20" fill="none" stroke="#aaa" strokeWidth="2.6">
            <path d="M1 1l10 9-10 9" />
          </Icon>
        </CardHead>
        <CardLine $mt={8}>
          <Fit w={217} size={31.5}>A 股市场排名第</Fit>
          <Fit w={54} size={34} weight={500} color="#c05a36">329</Fit>
          <Fit ml={1} w={32} size={31.5}>名</Fit>
        </CardLine>
        <CardLine>
          <Fit w={94} size={31.5}>较昨日</Fit>
          <Icon $ml={1} width="22" height="30" viewBox="0 0 22 30" fill="#5fae6c">
            <path d="M9 1.500Q11-1 13 1.500V14h7q2.500 1 .5 3.500L12 28q-1.500 1.500-3 0L.8 17.500Q-.8 15 2 14H9z" />
          </Icon>
          <Fit ml={3} w={40} size={34} weight={500} color="#5fae6c">56</Fit>
          <Fit ml={5} w={31} size={31.5}>名</Fit>
        </CardLine>
      </CardBody>
    </Card>
  );
}

function SentimentCard() {
  return (
    <Card>
      <CardArt width="473" height="210" viewBox="0 0 473 210">
        <path d="M243 0H473V180H262z" fill="#fceeec" opacity=".75" />
        <g fontStyle="italic" fontWeight="900" fontSize="135" fontFamily="Roboto" strokeLinejoin="round">
          <text x="300" y="132" fill="#fef6f4" stroke="#fef6f4" strokeWidth="36" textLength="172" lengthAdjust="spacingAndGlyphs">VS</text>
          <text x="300" y="132" fill="#fbeae8" textLength="172" lengthAdjust="spacingAndGlyphs">VS</text>
        </g>
      </CardArt>
      <CardBody>
        <CardHead>
          <Icon width="42" height="42" viewBox="0 0 42 42">
            <circle cx="21" cy="21" r="21" fill="url(#badge)" />
            <text x="7" y="31" fontSize="27" fontWeight="900" fontStyle="italic" fill="#fff" textLength="27" lengthAdjust="spacingAndGlyphs">VS</text>
          </Icon>
          <CardTitle>多空看盘</CardTitle>
        </CardHead>
        <Vote>
          <VoteKnob>
            <Icon width="20" height="16" viewBox="0 0 20 16"><path d="M10 2L18 14H2z" fill="#d0502b" stroke="#d0502b" strokeWidth="3" strokeLinejoin="round" /></Icon>
          </VoteKnob>
          <VoteText $ml={21} $color="#c95733">看涨<Fit w={50} size={27}>**%</Fit></VoteText>
          <VoteText $ml={107} $mr={17} $color="#58a967">看跌<Fit w={50} size={27}>**%</Fit></VoteText>
          <VoteKnob>
            <Icon width="20" height="16" viewBox="0 0 20 16"><path d="M10 14L18 2H2z" fill="#5fae6c" stroke="#5fae6c" strokeWidth="3" strokeLinejoin="round" /></Icon>
          </VoteKnob>
        </Vote>
      </CardBody>
    </Card>
  );
}

function Filters() {
  return (
    <FilterRow>
      <FilterTab $weight={700} $color="#333">
        <FilterTop>
          最新
          <Icon $ml={9} width="19" height="10" viewBox="0 0 19 10" fill="none" stroke="#888" strokeWidth="2.2"><path d="M1 1l8.500 8L18 1" /></Icon>
        </FilterTop>
        <FilterBar />
      </FilterTab>
      <FilterTab $weight={500} $color="#666" $ml={53}>最热</FilterTab>
      <FilterAll>
        <Icon width="40" height="40" viewBox="0 0 40 40" fill="none" stroke="#333" strokeWidth="3" strokeLinejoin="round" strokeLinecap="round">
          <path d="M11.500 31V19.500L2.500 6Q1 2 4 2H31Q34 2 32.500 6L22 19V38" />
          <path d="M29.500 24h6M29.500 32h6" stroke="#db6f3c" strokeWidth="4" />
        </Icon>
        <Fit ml={12} w={71} size={35.5}>全部</Fit>
      </FilterAll>
    </FilterRow>
  );
}

function BottomActions() {
  const stroke = { fill: "none", stroke: "#6a6a6a", strokeWidth: 2.5, strokeLinecap: "round", strokeLinejoin: "round" };
  return (
    <BottomBar>
      <IndexBox>
        <Triangle $up $w={19} $h={6} $color="#777" />
        <IndexRow $h={52} $mt={2} $pl={60}><Fit w={124} size={37} color={C.green}>3995.77</Fit></IndexRow>
        <IndexRow $h={34} $pl={36}>上证<Fit ml={41} w={98} size={34} color={C.green}>-0.17%</Fit></IndexRow>
      </IndexBox>
      <Action>
        <Icon width="60" height="52" viewBox="0 0 60 52" {...stroke}>
          <path d="M17 7A24 24 0 0 1 52 36l6-5M45 45A24 24 0 0 1 8 15L2 20" />
          <path d="M22 13l8 11 8-11M30 24v15M21 24.500h18M21 32h18" />
        </Icon>
        交易
      </Action>
      <Action>
        <Icon width="50" height="52" viewBox="0 0 50 52" {...stroke}>
          <path d="M34 3H8Q2 3 2 9V43Q2 49 8 49H42Q48 49 48 43V18" />
          <path d="M19 33l3-9L41 8l4 4L25 30z" fill="#6a6a6a" strokeWidth="1" />
          <path d="M44.500 5.500l2.500 2.500" strokeWidth="5" />
        </Icon>
        发帖
      </Action>
      <Action>
        <Icon width="50" height="52" viewBox="0 0 50 52" {...stroke}>
          <rect x="3" y="4" width="19" height="19" rx="3.5" />
          <rect x="3" y="28.5" width="19" height="19" rx="3.5" />
          <rect x="27.5" y="28.5" width="19" height="19" rx="3.5" />
          <path d="M37.500 3.500L48 14 37.500 24.500 27 14z" />
        </Icon>
        功能
      </Action>
      <Action>
        <Icon width="50" height="52" viewBox="0 0 50 52" {...stroke}>
          <circle cx="25" cy="26" r="23.5" />
          {[14.5, 25, 35.5].map((x) => <circle key={x} cx={x} cy="26" r="1.600" fill="#6a6a6a" />)}
        </Icon>
        设自选
      </Action>
    </BottomBar>
  );
}

export default function App() {
  return (
    <Page>
      <GlobalStyle />
      <Status />
      <Header />
      <QuotePanel />
      <PeriodTabs />
      <MaRow />
      <ChartArea>
        <PriceChart />
        <ChartControls />
      </ChartArea>
      <VolumeRow />
      <VolumeChart />
      <Axis>
        <AxisTicks />
        <AxisLabels>
          <Fit w={145} size={33}>20250815</Fit>
          <Fit ml={88} w={153} size={33}>20250909</Fit>
          <Fit ml={214} w={138} size={33}>20251015</Fit>
          <Fit ml={161} w={130} size={33}>20251112</Fit>
        </AxisLabels>
      </Axis>
      <Banner>
        <Icon width="40" height="36" viewBox="0 0 40 36" fill="#d95f28">
          <path d="M8 10L39 0V36L30 33 26 34.500 24 31 17 31 15 28 8 26zM0 12h2v13H0zM3.500 11H6v15H3.500z" />
        </Icon>
        <BannerText>整整一年免费送！这份新客福利您领取了吗？</BannerText>
        <BannerRule />
        <Icon width="28" height="27" viewBox="0 0 28 27" fill="none" stroke="#d26a3a" strokeWidth="3"><path d="M1 1l26 25M27 1L1 26" /></Icon>
      </Banner>
      <Tabs $h={93} $pl={33} $top>
        {["股吧", "盘口", "资讯", "公告", "研报", "财务", "资料"].map((t) => (
          <TabItem key={t} $w={144.7} $active={t === "股吧"}><TabLabel>{t}</TabLabel></TabItem>
        ))}
      </Tabs>
      <Cards>
        <PopularityCard />
        <SentimentCard />
      </Cards>
      <Filters />
      <BottomActions />
      <SystemNav>
        <Icon width="37" height="38" viewBox="0 0 37 38" stroke="#7a7a7a" strokeWidth="4.5" strokeLinecap="round"><path d="M2 4h33M2 19h33M2 34h33" /></Icon>
        <Icon $ml={194} width="40" height="40" viewBox="0 0 40 40" fill="none" stroke="#7a7a7a" strokeWidth="4"><rect x="2.5" y="2" width="35" height="35" rx="8" /></Icon>
        <Icon $ml={198} width="26" height="40" viewBox="0 0 26 40" fill="none" stroke="#7a7a7a" strokeWidth="4" strokeLinecap="round" strokeLinejoin="round"><path d="M23 2L4 17.500Q2 19.500 4 21.500L23 37" /></Icon>
      </SystemNav>
    </Page>
  );
}
